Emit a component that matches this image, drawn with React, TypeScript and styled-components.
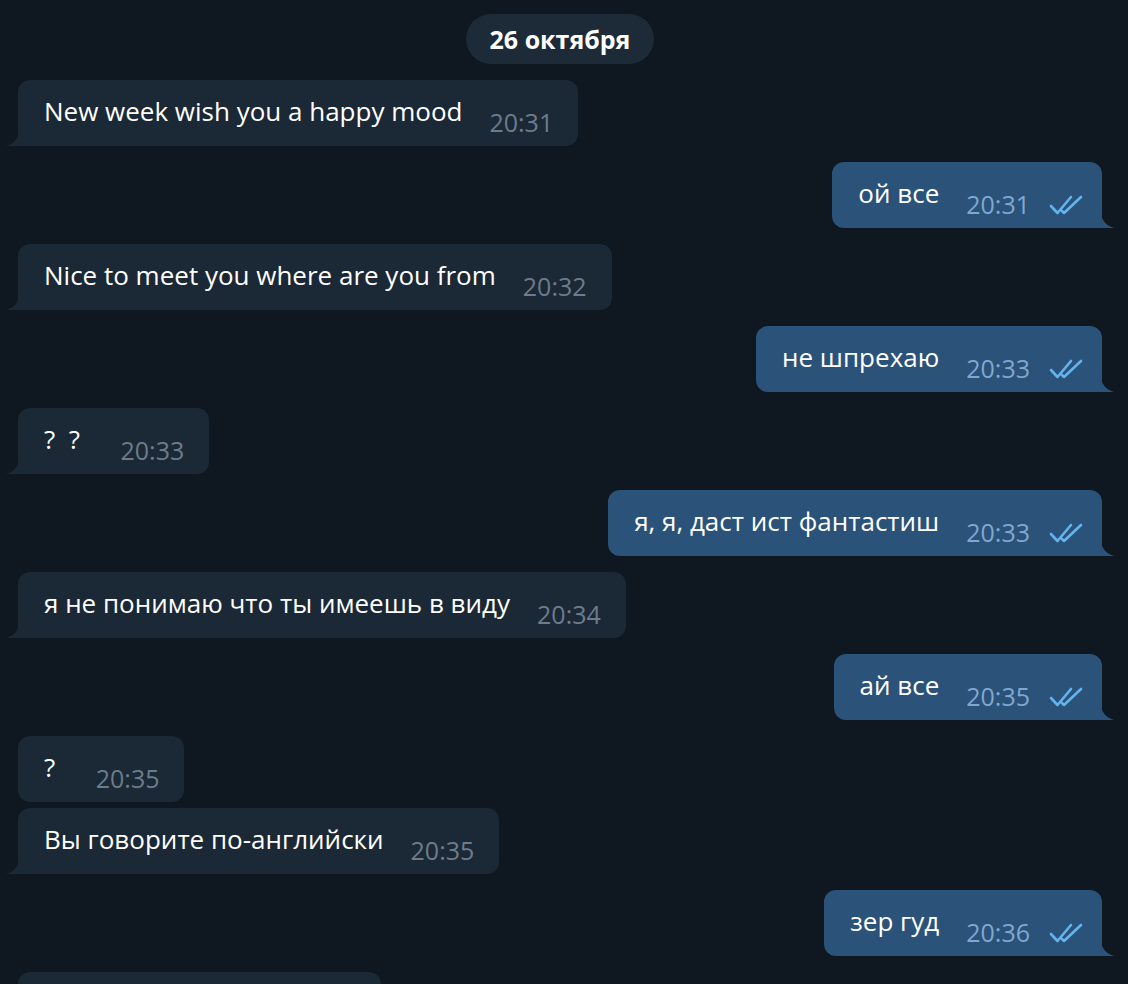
import React from "react";
import styled, { createGlobalStyle } from "styled-components";

interface Message {
  id: number;
  text: string;
  time: string;
  out?: boolean;
  grouped?: boolean;
  tail?: boolean;
}

const messages: Message[] = [
  { id: 1, text: "New week wish you a happy mood", time: "20:31", tail: true },
  { id: 2, text: "ой все", time: "20:31", out: true, tail: true },
  { id: 3, text: "Nice to meet you where are you from", time: "20:32", tail: true },
  { id: 4, text: "не шпрехаю", time: "20:33", out: true, tail: true },
  { id: 5, text: "?  ?  ", time: "20:33", tail: true },
  { id: 6, text: "я, я, даст ист фантастиш", time: "20:33", out: true, tail: true },
  { id: 7, text: "я не понимаю что ты имеешь в виду", time: "20:34", tail: true },
  { id: 8, text: "ай все", time: "20:35", out: true, tail: true },
  { id: 9, text: "?  ", time: "20:35" },
  { id: 10, text: "Вы говорите по-английски", time: "20:35", grouped: true, tail: true },
  { id: 11, text: "зер гуд", time: "20:36", out: true, tail: true },
  { id: 12, text: "Где вы работаете", time: "20:37", tail: true },
];

const GlobalStyle = createGlobalStyle`
  html, body {
    margin: 0;
    padding: 0;
    height: 984px;
    overflow: hidden;
    background: #0f1721;
  }
  body {
    font-family: "Open Sans", "Liberation Sans", sans-serif;
  }
`;

const Tail: React.FC<{ out?: boolean; color: string }> = ({ out, color }) => (
  <TailSvg out={out} width="14" height="17" viewBox="0 0 14 17">
    {out ? (
      <path d="M0 0 Q0 13 13 17 L0 17 Z" fill={color} />
    ) : (
      <path d="M14 0 Q14 13 1 17 L14 17 Z" fill={color} />
    )}
  </TailSvg>
);

const Checks = () => (
  <CheckSvg width="36" height="22" viewBox="0 0 36 22">
    <path
      d="M2 12 L8.5 19 L22 3 M13 17 L15 19 L32 3"
      fill="none"
      stroke="#63b3ee"
      strokeWidth="2.6"
      strokeLinecap="round"
      strokeLinejoin="round"
    />
  </CheckSvg>
);

const App: React.FC = () => {
  return (
    <>
      <GlobalStyle />
      <Chat>
        <DateRow>
          <DatePill>26 октября</DatePill>
        </DateRow>
        {messages.map((m) => (
          <Row key={m.id} out={m.out} grouped={m.grouped}>
            <Bubble out={m.out} tail={m.tail}>
              <Text>{m.text}</Text>
              <Time out={m.out}>{m.time}</Time>
              {m.out && <Checks />}
              {m.tail && <Tail out={m.out} color={m.out ? "#2b5278" : "#1b2835"} />}
            </Bubble>
          </Row>
        ))}
      </Chat>
    </>
  );
};

export default App;

const Chat = styled.div`
  display: flex;
  flex-direction: column;
  padding: 14px 26px 0 18px;
  background: #0f1721;
  min-height: 984px;
  box-sizing: border-box;
`;

const DateRow = styled.div`
  display: flex;
  justify-content: center;
`;

const DatePill = styled.div`
  height: 50px;
  padding: 0 24px;
  border-radius: 25px;
  background: #1d2b39;
  color: #ffffff;
  font-weight: 700;
  font-size: 25px;
  line-height: 50px;
`;

const Row = styled.div<{ out?: boolean; grouped?: boolean }>`
  display: flex;
  justify-content: ${(p) => (p.out ? "flex-end" : "flex-start")};
  margin-top: ${(p) => (p.grouped ? "6px" : "16px")};
`;

const Bubble = styled.div<{ out?: boolean; tail?: boolean }>`
  position: relative;
  display: flex;
  align-items: flex-start;
  height: 66px;
  box-sizing: border-box;
  padding: 14px ${(p) => (p.out ? "17px" : "25px")} 0 26px;
  border-radius: 12px;
  ${(p) =>
    p.tail
      ? p.out
        ? "border-bottom-right-radius: 0;"
        : "border-bottom-left-radius: 0;"
      : ""}
  background: ${(p) => (p.out ? "#2b5278" : "#1b2835")};
`;

const Text = styled.span`
  color: #ffffff;
  font-size: 26px;
  line-height: 34px;
  white-space: pre;
`;

const Time = styled.span<{ out?: boolean }>`
  margin-left: 27px;
  margin-top: 11px;
  color: ${(p) => (p.out ? "#7fa8d1" : "#6c7c8c")};
  font-size: 25px;
  line-height: 34px;
`;

const CheckSvg = styled.svg`
  margin-left: 19px;
  margin-top: 18px;
  flex-shrink: 0;
`;

const TailSvg = styled.svg<{ out?: boolean }>`
  position: absolute;
  bottom: 0;
  ${(p) => (p.out ? "right: -13px;" : "left: -13px;")}
`;
